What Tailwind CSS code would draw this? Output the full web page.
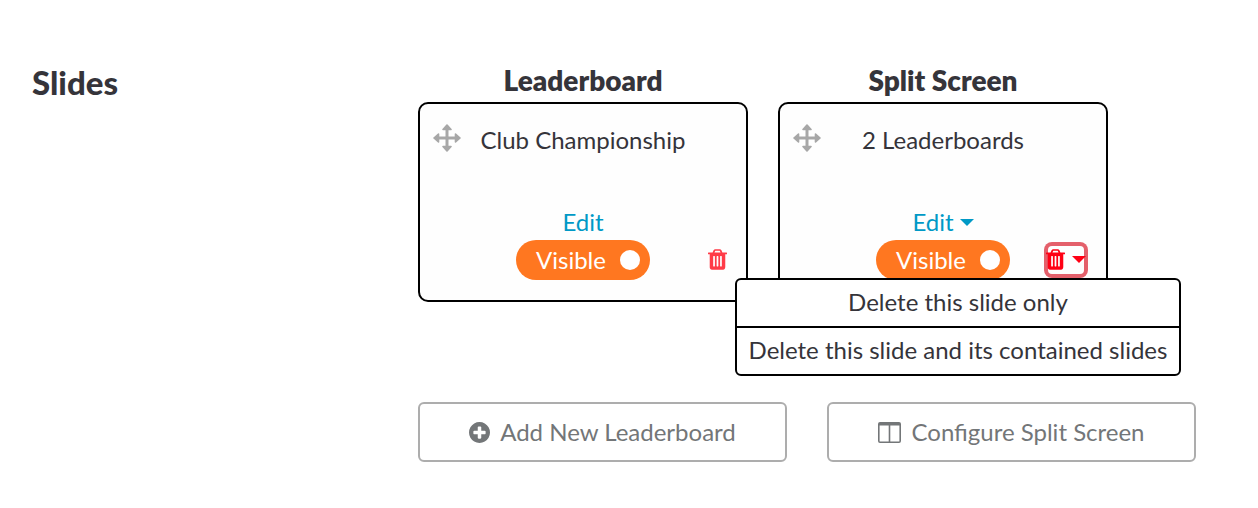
<!DOCTYPE html>
<html lang="en">
<head>
    <meta charset="UTF-8">
    <meta name="viewport" content="width=device-width, initial-scale=1.0">
    <title>Slides</title>
    <script src="https://cdn.jsdelivr.net/npm/@tailwindcss/browser@4"></script>
</head>
<body class="bg-white font-['Lato',sans-serif] text-[24px] leading-8 text-[#35343a]">

    <svg class="hidden" xmlns="http://www.w3.org/2000/svg">
        <symbol id="icon-arrows" viewBox="0 0 28 28">
            <path d="M14 4v20M4 14h20" fill="none" stroke="currentColor" stroke-width="3" />
            <path d="M14 1l4 4.5h-8zM14 27l4-4.5h-8zM1 14l4.5-4v8zM27 14l-4.5-4v8z" stroke="currentColor" stroke-width="1.6" stroke-linejoin="round" />
        </symbol>
        <symbol id="icon-trash" viewBox="192 128 1408 1536">
            <path d="M704 1376v-704q0-14-9-23t-23-9h-64q-14 0-23 9t-9 23v704q0 14 9 23t23 9h64q14 0 23-9t9-23zm256 0v-704q0-14-9-23t-23-9h-64q-14 0-23 9t-9 23v704q0 14 9 23t23 9h64q14 0 23-9t9-23zm256 0v-704q0-14-9-23t-23-9h-64q-14 0-23 9t-9 23v704q0 14 9 23t23 9h64q14 0 23-9t9-23zm-544-992h448l-48-117q-7-9-17-11h-317q-10 2-17 11zm928 32v64q0 14-9 23t-23 9h-96v948q0 83-47 143.5t-113 60.5h-832q-66 0-113-58.5t-47-141.5v-952h-96q-14 0-23-9t-9-23v-64q0-14 9-23t23-9h309l70-167q15-37 54-63t79-26h320q40 0 79 26t54 63l70 167h309q14 0 23 9t9 23z" />
        </symbol>
        <symbol id="icon-caret" viewBox="0 0 14 7">
            <path d="M0 0h14l-7 7z" />
        </symbol>
    </svg>

    <main class="flex px-8 pt-[60px]">
        <h2 class="w-[386px] shrink-0 pt-1.5 text-[33px] font-black">Slides</h2>

        <div class="flex-1">
            <div class="flex gap-[30px]">
                <section class="w-[330px]">
                    <h3 class="pt-1 pb-1.5 text-center text-[28px] font-extrabold">Leaderboard</h3>
                    <div class="flex h-[200px] flex-col rounded-[10px] border-2 border-black bg-[#fefefe] px-[13px] pt-5 pb-5">
                        <div class="grid grid-cols-[28px_1fr_28px] items-start">
                            <button type="button" aria-label="Move slide" class="text-[#a7a7a7]"><svg class="size-7 fill-current"><use href="#icon-arrows" /></svg></button>
                            <p class="text-center">Club Championship</p>
                        </div>
                        <div class="mt-auto pb-0.5 text-center">
                            <a href="#" class="text-[#0099c6]">Edit</a>
                        </div>
                        <div class="grid grid-cols-[1fr_auto_1fr] items-center">
                            <label class="col-start-2 flex h-10 w-[134px] items-center justify-between rounded-full bg-[#ff7720] pr-2.5 pl-5 text-white">
                                Visible
                                <input type="checkbox" checked class="size-5 appearance-none rounded-full bg-white">
                            </label>
                            <button type="button" aria-label="Delete slide" class="mr-1.5 pb-0.5 justify-self-end text-[#ff3b47]"><svg class="h-[21px] w-[19px] fill-current"><use href="#icon-trash" /></svg></button>
                        </div>
                    </div>
                </section>

                <section class="w-[330px]">
                    <h3 class="pt-1 pb-1.5 text-center text-[28px] font-extrabold">Split Screen</h3>
                    <div class="flex h-[200px] flex-col rounded-[10px] border-2 border-black bg-[#fefefe] px-[13px] pt-5 pb-5">
                        <div class="grid grid-cols-[28px_1fr_28px] items-start">
                            <button type="button" aria-label="Move slide" class="text-[#a7a7a7]"><svg class="size-7 fill-current"><use href="#icon-arrows" /></svg></button>
                            <p class="text-center">2 Leaderboards</p>
                        </div>
                        <div class="mt-auto flex justify-center pb-0.5">
                            <button type="button" class="flex items-center gap-1.5 text-[#0099c6]">Edit <svg class="h-[7px] w-3.5 fill-current"><use href="#icon-caret" /></svg></button>
                        </div>
                        <div class="grid grid-cols-[1fr_auto_1fr] items-center">
                            <label class="col-start-2 flex h-10 w-[134px] items-center justify-between rounded-full bg-[#ff7720] pr-2.5 pl-5 text-white">
                                Visible
                                <input type="checkbox" checked class="size-5 appearance-none rounded-full bg-white">
                            </label>
                            <div class="relative mr-[5px] justify-self-end">
                                <button type="button" aria-label="Delete slide" aria-expanded="true" class="flex h-9 w-11 items-center justify-between rounded-lg px-0.5 pb-0.5 text-[#ff0014] inset-ring-4 inset-ring-[#e4606b]">
                                    <svg class="h-[21px] w-[19px] fill-current"><use href="#icon-trash" /></svg>
                                    <svg class="h-[7px] w-3.5 fill-current"><use href="#icon-caret" /></svg>
                                </button>
                                <!-- Delete menu -->
                                <div class="absolute top-full -right-[93px] flex w-[446px] flex-col divide-y-2 divide-black rounded-md border-2 border-black bg-white whitespace-nowrap">
                                    <button type="button" class="h-12 pb-0.5">Delete this slide only</button>
                                    <button type="button" class="h-[46px] pb-0.5">Delete this slide and its contained slides</button>
                                </div>
                            </div>
                        </div>
                    </div>
                </section>
            </div>

            <div class="mt-[100px] mr-[30px] flex gap-10 text-[#737678]">
                <button type="button" class="flex h-[60px] flex-1 items-center justify-center gap-2.5 rounded-md border-2 border-[#adadad] bg-white">
                    <svg viewBox="128 128 1536 1536" class="size-[21px] fill-current"><path d="M1344 960v-128q0-26-19-45t-45-19h-256v-256q0-26-19-45t-45-19h-128q-26 0-45 19t-19 45v256h-256q-26 0-45 19t-19 45v128q0 26 19 45t45 19h256v256q0 26 19 45t45 19h128q26 0 45-19t19-45v-256h256q26 0 45-19t19-45zm320-64q0 209-103 385.5t-279.5 279.5-385.5 103-385.5-103-279.5-279.5-103-385.5 103-385.5 279.5-279.5 385.5-103 385.5 103 279.5 279.5 103 385.5z" /></svg>
                    Add New Leaderboard
                </button>
                <button type="button" class="flex h-[60px] flex-1 items-center justify-center gap-2.5 rounded-md border-2 border-[#adadad] bg-white">
                    <svg viewBox="0 0 23 21" class="h-[21px] w-[23px] fill-current"><path fill-rule="evenodd" d="M2 0h19a2 2 0 0 1 2 2v17a2 2 0 0 1-2 2H2a2 2 0 0 1-2-2V2a2 2 0 0 1 2-2zM1.6 3.5V19a.5.5 0 0 0 .5.5h8.6v-16zM12.3 3.5v16h8.6a.5.5 0 0 0 .5-.5V3.5z" /></svg>
                    Configure Split Screen
                </button>
            </div>
        </div>
    </main>

</body>
</html>
